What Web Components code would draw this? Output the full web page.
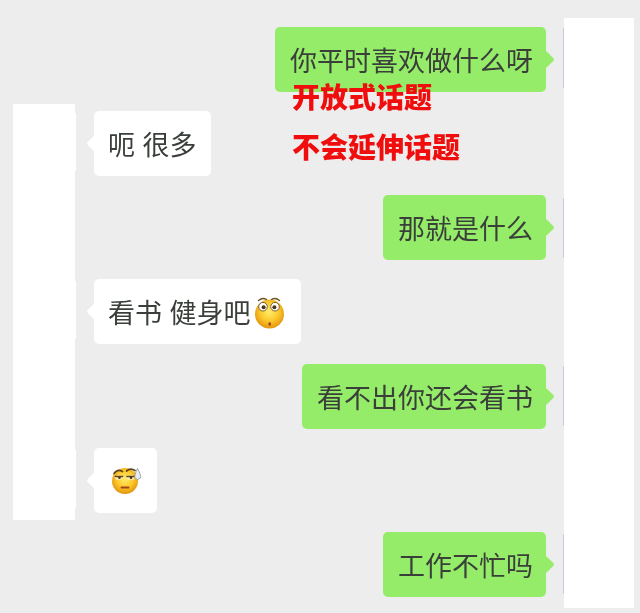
<!DOCTYPE html>
<html lang="zh">
<head>
<meta charset="utf-8">
<title>聊天记录</title>
<style>
  html, body { margin: 0; padding: 0; background: #ededed; }
</style>
</head>
<body>
<chat-page>
  <chat-bubble side="right">你平时喜欢做什么呀</chat-bubble>
  <chat-bubble side="left">呃 很多</chat-bubble>
  <chat-bubble side="right">那就是什么</chat-bubble>
  <chat-bubble side="left">看书 健身吧<chat-emoji kind="surprised"></chat-emoji></chat-bubble>
  <chat-bubble side="right">看不出你还会看书</chat-bubble>
  <chat-bubble side="left" class="only-emoji"><chat-emoji kind="sweat"></chat-emoji></chat-bubble>
  <chat-bubble side="right">工作不忙吗</chat-bubble>
  <note-label slot="notes" top="85">开放式话题</note-label>
  <note-label slot="notes" top="135">不会延伸话题</note-label>
</chat-page>

<script>
class ChatPage extends HTMLElement {
    connectedCallback() {
        if (this.shadowRoot) return;
        let shadowRoot = this.attachShadow({mode: 'open'});
        shadowRoot.innerHTML = `
        <style>
            :host {
                display: grid;
                grid-template-columns: 62px 1fr 70px;
                position: relative;
                width: 640px;
                height: 613px;
                padding: 0 6px 0 13px;
                box-sizing: border-box;
                background: #ededed;
                overflow: hidden;
                font-family: "Liberation Sans", "Noto Sans CJK SC", sans-serif;
                filter: blur(0.35px);
            }
            .left-mask { position: relative; background: #fff; margin-top: 104px; height: 416px; }
            .right-mask { position: relative; background: #fff; margin-top: 18px; height: 590px; }
            .edge {
                position: absolute;
                left: -1px;
                width: 1px;
                height: 60px;
                background: #c3ccdb;
            }
            .bump {
                position: absolute;
                right: -1px;
                width: 1px;
                height: 58px;
                background: #fff;
            }
            .messages {
                display: flex;
                flex-direction: column;
                gap: 19.17px;
                padding: 27px 18px 0 19px;
            }
        </style>
        <div class="left-mask">
            <div class="bump" style="top: 9px"></div>
            <div class="bump" style="top: 177px"></div>
            <div class="bump" style="top: 346px"></div>
        </div>
        <div class="messages"><slot></slot></div>
        <div class="right-mask">
            <div class="edge" style="top: 10px"></div>
            <div class="edge" style="top: 180px"></div>
            <div class="edge" style="top: 348px"></div>
            <div class="edge" style="top: 516px"></div>
        </div>
        <slot name="notes"></slot>`;
    }
}

class ChatBubble extends HTMLElement {
    connectedCallback() {
        if (this.shadowRoot) return;
        let shadowRoot = this.attachShadow({mode: 'open'});
        shadowRoot.innerHTML = `
        <style>
            :host {
                display: flex;
                flex: none;
                position: relative;
                align-items: center;
                height: 65px;
                padding: 0 14px;
                box-sizing: border-box;
                border-radius: 5px;
                font-size: 27px;
                color: #3a3f3a;
                white-space: nowrap;
            }
            :host([side="right"]) { align-self: flex-end; background: #95ec69; padding: 0 13px 0 15px; }
            :host([side="left"]) { align-self: flex-start; background: #fff; }
            :host(.only-emoji) { width: 63px; padding: 0; justify-content: center; }
            .tail {
                position: absolute;
                top: 26px;
                width: 13px;
                height: 13px;
                border-radius: 2px;
                transform: rotate(45deg);
            }
            :host([side="right"]) .tail { right: -6px; background: #95ec69; }
            :host([side="left"]) .tail { left: -5px; background: #fff; }
        </style>
        <div class="tail"></div>
        <slot></slot>`;
    }
}

const emojiDefs = `
    <defs>
        <radialGradient id="face" cx="50%" cy="42%" r="58%">
            <stop offset="0" stop-color="#ffec6e"/>
            <stop offset="0.55" stop-color="#fcc92c"/>
            <stop offset="1" stop-color="#e2930c"/>
        </radialGradient>
    </defs>`;

const emojiFaces = {
    surprised: `<svg width="30" height="33" viewBox="0 0 30 33">${emojiDefs}
        <circle cx="14.5" cy="18" r="14.5" fill="url(#face)"/>
        <circle cx="8" cy="10.7" r="4.3" fill="#fff" stroke="#6b5228" stroke-width="0.9"/>
        <circle cx="20" cy="10.7" r="4.3" fill="#fff" stroke="#6b5228" stroke-width="0.9"/>
        <circle cx="8.6" cy="11.2" r="2" fill="#4a3718"/>
        <circle cx="19.4" cy="11.2" r="2" fill="#4a3718"/>
        <path d="M3.5 4.5 Q7.5 1 11.5 3.5 M16.5 3.5 Q20.5 1 24.5 4.5" fill="none" stroke="#6b5228" stroke-width="1.4" stroke-linecap="round"/>
        <ellipse cx="14.7" cy="28" rx="1.4" ry="1.7" fill="#a5431a"/>
    </svg>`,
    sweat: `<svg width="32" height="32" viewBox="0 0 32 32">${emojiDefs}
        <circle cx="14" cy="16" r="13" fill="url(#face)"/>
        <path d="M3 8.5 Q6.5 3.5 11.5 6.5 M15.5 6 Q19.5 2.5 24 5.5" fill="none" stroke="#5e4520" stroke-width="1.7" stroke-linecap="round"/>
        <ellipse cx="8" cy="12.5" rx="4.2" ry="2.3" fill="#ffeeb0"/>
        <ellipse cx="19.5" cy="12.5" rx="4.2" ry="2.3" fill="#ffeeb0"/>
        <path d="M3.8 11.5 H12.2 M15.3 11.5 H23.7" stroke="#5e4520" stroke-width="1.3"/>
        <circle cx="8.5" cy="12.8" r="1.3" fill="#4a3718"/>
        <circle cx="20" cy="12.8" r="1.3" fill="#4a3718"/>
        <path d="M10.5 22.5 H17.5" stroke="#a5431a" stroke-width="1.8" stroke-linecap="round"/>
        <path d="M26.5 3.5 Q30.5 10.5 29.5 13 Q26.5 16 24 13 Q23 10.5 26.5 3.5 Z" fill="#e6edf1" stroke="#87939b" stroke-width="0.8"/>
    </svg>`
};

class ChatEmoji extends HTMLElement {
    connectedCallback() {
        if (this.shadowRoot) return;
        let shadowRoot = this.attachShadow({mode: 'open'});
        shadowRoot.innerHTML = `
        <style>
            :host { display: inline-flex; flex: none; margin: 2px 2px 0 4px; }
            :host([kind="sweat"]) { margin: 1px 0 0 3px; }
            svg { display: block; }
        </style>
        ${emojiFaces[this.getAttribute('kind')]}`;
    }
}

class NoteLabel extends HTMLElement {
    connectedCallback() {
        if (this.shadowRoot) return;
        let shadowRoot = this.attachShadow({mode: 'open'});
        shadowRoot.innerHTML = `
        <style>
            :host {
                display: block;
                position: absolute;
                left: 292px;
                top: ${this.getAttribute('top')}px;
                font-size: 28px;
                line-height: 28px;
                font-weight: 900;
                color: #f00d0d;
                white-space: nowrap;
            }
        </style>
        <slot></slot>`;
    }
}

window.customElements.define('chat-page', ChatPage);
window.customElements.define('chat-bubble', ChatBubble);
window.customElements.define('chat-emoji', ChatEmoji);
window.customElements.define('note-label', NoteLabel);
</script>
</body>
</html>
